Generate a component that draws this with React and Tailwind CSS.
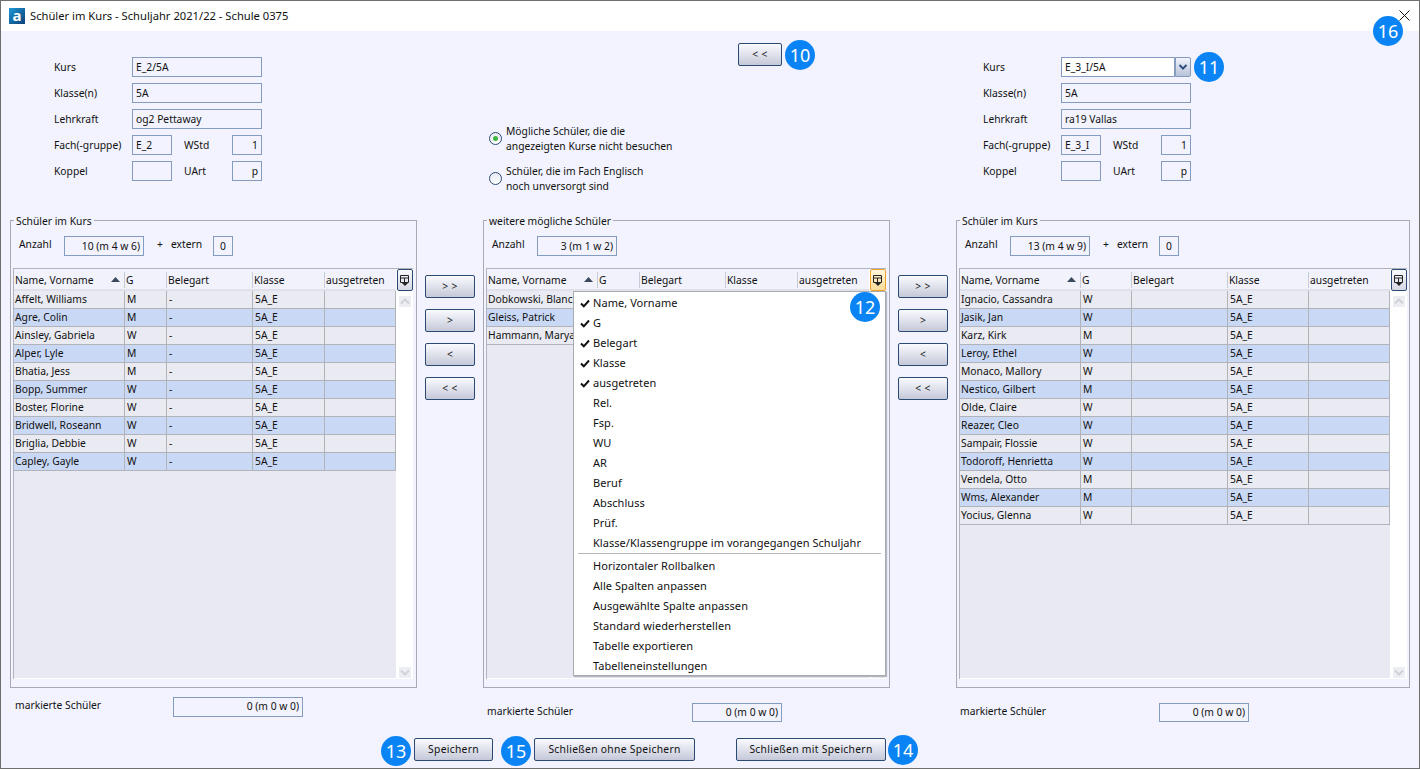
import React from 'react';

const linksRows = [
  ['Affelt, Williams', 'M'],
  ['Agre, Colin', 'M'],
  ['Ainsley, Gabriela', 'W'],
  ['Alper, Lyle', 'M'],
  ['Bhatia, Jess', 'M'],
  ['Bopp, Summer', 'W'],
  ['Boster, Florine', 'W'],
  ['Bridwell, Roseann', 'W'],
  ['Briglia, Debbie', 'W'],
  ['Capley, Gayle', 'W'],
];

// Die restlichen Spalten liegen hier komplett unter dem Menü
const mitteRows = [
  ['Dobkowski, Blanche'],
  ['Gleiss, Patrick'],
  ['Hammann, Maryann'],
];

const rechtsRows = [
  ['Ignacio, Cassandra', 'W'],
  ['Jasik, Jan', 'W'],
  ['Karz, Kirk', 'M'],
  ['Leroy, Ethel', 'W'],
  ['Monaco, Mallory', 'W'],
  ['Nestico, Gilbert', 'M'],
  ['Olde, Claire', 'W'],
  ['Reazer, Cleo', 'W'],
  ['Sampair, Flossie', 'W'],
  ['Todoroff, Henrietta', 'W'],
  ['Vendela, Otto', 'M'],
  ['Wms, Alexander', 'M'],
  ['Yocius, Glenna', 'W'],
];

const menuOben = [
  ['Name, Vorname', true],
  ['G', true],
  ['Belegart', true],
  ['Klasse', true],
  ['ausgetreten', true],
  ['Rel.', false],
  ['Fsp.', false],
  ['WU', false],
  ['AR', false],
  ['Beruf', false],
  ['Abschluss', false],
  ['Prüf.', false],
  ['Klasse/Klassengruppe im vorangegangen Schuljahr', false],
];

const menuUnten = [
  'Horizontaler Rollbalken',
  'Alle Spalten anpassen',
  'Ausgewählte Spalte anpassen',
  'Standard wiederherstellen',
  'Tabelle exportieren',
  'Tabelleneinstellungen',
];

const SCHMAL = 'grid-cols-[111px_42px_86px_72px_71px]';
const BREIT = 'grid-cols-[121px_51px_96px_81px_81px]';

// Blauer Nummernkreis
const Badge = ({ n, className }) => (
  <div className={`absolute w-[30px] h-[30px] rounded-full bg-[#0a84f4] text-white text-[18px] leading-[30px] text-center z-30 ${className}`}>
    {n}
  </div>
);

const Feld = ({ children, className = '', right }) => (
  <div className={`h-5 border border-[#839cc0] px-[3px] leading-[18px] whitespace-nowrap ${right ? 'text-right' : ''} ${className}`}>
    {children}
  </div>
);

const Knopf = ({ children, className = '' }) => (
  <button className={`border border-[#2b4a73] rounded-[2px] bg-gradient-to-b from-[#fafbff] to-[#c5c8d8] text-[10.3px] tracking-[0.3px] text-[#111] flex items-center justify-center ${className}`}>
    {children}
  </button>
);

const Formular = ({ kurs, klasse, lehrkraft, fach, wstd, uart, auswahl }) => (
  <div className="flex flex-col gap-[6px] w-[209px]">
    <div className="flex items-center h-5">
      <span className="w-[78px] pt-[2px]">Kurs</span>
      {auswahl ? (
        <div className="flex w-[130px] h-5">
          <div className="w-[114px] h-5 border border-[#839cc0] bg-white px-[3px] leading-[18px]">{kurs}</div>
          <div className="w-4 h-5 border border-[#839cc0] rounded-r-[2px] bg-gradient-to-b from-[#f2f4fb] to-[#b9c2d8] flex items-center justify-center">
            <svg width="10" height="8" viewBox="0 0 10 8"><path d="M1.5 2 L5 5.5 L8.5 2" fill="none" stroke="#2f4f7f" strokeWidth="2" /></svg>
          </div>
        </div>
      ) : (
        <Feld className="w-[130px]">{kurs}</Feld>
      )}
    </div>
    <div className="flex items-center h-5">
      <span className="w-[78px] pt-[2px]">Klasse(n)</span>
      <Feld className="w-[130px]">{klasse}</Feld>
    </div>
    <div className="flex items-center h-5">
      <span className="w-[78px] pt-[2px]">Lehrkraft</span>
      <Feld className="w-[130px]">{lehrkraft}</Feld>
    </div>
    <div className="flex items-center h-5">
      <span className="w-[78px] pt-[2px]">Fach(-gruppe)</span>
      <Feld className="w-10">{fach}</Feld>
      <span className="ml-3 w-[48px] pt-[2px]">WStd</span>
      <Feld className="w-[30px]" right>{wstd}</Feld>
    </div>
    <div className="flex items-center h-5">
      <span className="w-[78px] pt-[2px]">Koppel</span>
      <Feld className="w-10" />
      <span className="ml-3 w-[48px] pt-[2px]">UArt</span>
      <Feld className="w-[30px]" right>{uart}</Feld>
    </div>
  </div>
);

const Radio = ({ an, children }) => (
  <div className="flex items-center gap-[4px]">
    <div className="w-[13px] h-[13px] rounded-full border border-[#2b4a73] bg-gradient-to-b from-[#e8ebf5] to-white flex items-center justify-center">
      {an && <div className="w-[5px] h-[5px] rounded-full bg-[#3fb53f]" />}
    </div>
    <div className="leading-[15px] pt-px">{children}</div>
  </div>
);

const MenuIcon = () => (
  <svg width="11" height="13" viewBox="0 0 11 13">
    <path d="M1.5 1.5 H9.5 V8.5 H1.5 Z M1.5 4 H9.5 M5.5 4 V8.5" fill="none" stroke="#222" strokeWidth="1" />
    <path d="M2.5 8.5 H9.5 L6 12 Z" fill="#222" />
  </svg>
);

const Pfeil = ({ unten }) => (
  <div className={`w-3 h-[11px] flex items-center justify-center bg-[#eceef3] ${unten ? 'mt-auto mb-[1px]' : 'mt-[5px]'}`}>
    <svg width="10" height="7" viewBox="0 0 10 7">
      <path d={unten ? 'M1 1.5 L5 5.5 L9 1.5' : 'M1 5.5 L5 1.5 L9 5.5'} fill="none" stroke="#d0d2d9" strokeWidth="2" />
    </svg>
  </div>
);

const Tabelle = ({ rows, spalten, breite, aktiv, beleg, klasse }) => (
  <div className={`relative flex h-[411px] border-t border-l border-[#b0b2bc] ${breite}`}>
    <div className="flex-1 flex flex-col bg-[#e8e9f3] border-b border-white">
      <div className={`grid ${spalten} h-[22px] pt-px bg-[#f1f2fc] border-b-2 border-[#dfe0ea] items-center shrink-0`}>
        <div className="relative pl-px border-r border-[#c9cbd6] h-4 leading-4">
          Name, Vorname
          <svg className="absolute right-[4px] top-[5px]" width="9" height="5" viewBox="0 0 9 5"><path d="M0 5 L4.5 0 L9 5 Z" fill="#3b4a5c" /></svg>
        </div>
        <div className="pl-px border-r border-[#c9cbd6] h-4 leading-4">G</div>
        <div className="pl-px border-r border-[#c9cbd6] h-4 leading-4">Belegart</div>
        <div className="pl-px border-r border-[#c9cbd6] h-4 leading-4">Klasse</div>
        <div className="pl-px h-4 leading-4">ausgetreten</div>
      </div>
      {rows.map(([name, g], i) => (
        <div key={name} className={`grid ${spalten} h-[18px] leading-[17px] border-b border-[#b1b3b8] shrink-0 ${i % 2 ? 'bg-[#c9d8f5]' : 'bg-[#e9eaf2]'}`}>
          <div className="pl-px border-r border-[#b1b3b8] whitespace-nowrap overflow-hidden">{name}</div>
          <div className="pl-[2px] border-r border-[#b1b3b8]">{g}</div>
          <div className="pl-[2px] border-r border-[#b1b3b8]">{beleg}</div>
          <div className="pl-[2px] border-r border-[#b1b3b8]">{klasse}</div>
          <div className="border-r border-[#b1b3b8]" />
        </div>
      ))}
    </div>
    <div className="w-[17px] flex flex-col items-center bg-white">
      <div className={`w-[16px] h-[22px] shrink-0 rounded-[2px] border flex items-center justify-center ${aktiv ? 'border-[#f0a22e] bg-gradient-to-b from-[#fff6dc] to-[#fbdc97]' : 'border-[#2b4a73] bg-gradient-to-b from-[#fafbff] to-[#d5d8e4]'}`}>
        <MenuIcon />
      </div>
      <Pfeil />
      <Pfeil unten />
    </div>
  </div>
);

const Panel = ({ titel, anzahl, extern, breite, tabelleBreite, spalten, rows, aktiv, beleg, klasse }) => (
  <div className={`relative h-[468px] border border-[#a6a9b6] pl-[2px] ${breite}`}>
    <span className="absolute -top-[7px] left-[3px] px-[2px] bg-[#f2f3fe] leading-[15px]">{titel}</span>
    <div className="flex items-center h-5 mt-[15px] ml-[6px]">
      <span className="w-[45px] pb-[2px]">Anzahl</span>
      <Feld className="w-20" right>{anzahl}</Feld>
      {extern && (
        <>
          <span className="ml-[13px] w-[14px] pb-[2px]">+</span>
          <span className="w-[42px] pb-[2px]">extern</span>
          <Feld className="w-5 text-center !px-0">{extern}</Feld>
        </>
      )}
    </div>
    <div className="mt-3">
      <Tabelle rows={rows} spalten={spalten} breite={tabelleBreite} aktiv={aktiv} beleg={beleg} klasse={klasse} />
    </div>
  </div>
);

const Markiert = ({ abstand, labelBreite, inputBreite, hoehe, pl }) => (
  <div className={`flex ${abstand} ${pl}`}>
    <span className={`${labelBreite} leading-4`}>markierte Schüler</span>
    <div className={`${inputBreite} ${hoehe} border border-[#839cc0] px-[3px] text-right leading-[17px]`}>0 (m 0 w 0)</div>
  </div>
);

const PfeilSpalte = () => (
  <div className="w-[66px] pl-[8px] flex flex-col gap-[11px] pt-[55px]">
    <Knopf className="w-[50px] h-[23px]">&gt; &gt;</Knopf>
    <Knopf className="w-[50px] h-[23px]">&gt;</Knopf>
    <Knopf className="w-[50px] h-[23px]">&lt;</Knopf>
    <Knopf className="w-[50px] h-[23px]">&lt; &lt;</Knopf>
  </div>
);

function App() {
  return (
    <div className="relative w-[1420px] h-[769px] overflow-hidden flex flex-col border border-[#6f6f6f] bg-[#f2f3fe] text-[10.3px] text-[#111] font-['Noto_Sans',sans-serif]">
      {/* Titelleiste */}
      <div className="h-[30px] bg-white flex items-center pl-2 shrink-0">
        <div className="w-4 h-4 bg-gradient-to-br from-[#1f9ad6] to-[#0d3f78] text-white font-bold text-[15px] leading-[14px] text-center">a</div>
        <span className="ml-[5px] text-[11.2px] text-[#111]">Schüler im Kurs - Schuljahr 2021/22 - Schule 0375</span>
        <svg className="ml-auto mr-[9px] -mt-[2px]" width="11" height="11" viewBox="0 0 11 11"><path d="M0.5 0.5 L10.5 10.5 M10.5 0.5 L0.5 10.5" stroke="#111" strokeWidth="1" /></svg>
      </div>

      {/* Kopfbereich */}
      <div className="flex h-[189px] pt-[26px] pl-[53px] shrink-0">
        <Formular kurs="E_2/5A" klasse="5A" lehrkraft="og2 Pettaway" fach="E_2" wstd="1" uart="p" />
        <div className="w-[494px] ml-[226px] -mt-[14px] flex flex-col">
          <Knopf className="ml-[249px] w-[44px] h-[23px]">&lt; &lt;</Knopf>
          <div className="mt-[57px] flex flex-col gap-[9px]">
            <Radio an>Mögliche Schüler, die die<br />angezeigten Kurse nicht besuchen</Radio>
            <Radio>Schüler, die im Fach Englisch<br />noch unversorgt sind</Radio>
          </div>
        </div>
        <Formular auswahl kurs="E_3_I/5A" klasse="5A" lehrkraft="ra19 Vallas" fach="E_3_I" wstd="1" uart="p" />
      </div>

      {/* Tabellenbereich */}
      <div className="flex pl-[9px]">
        <div>
          <Panel titel="Schüler im Kurs" anzahl="10 (m 4 w 6)" extern="0" breite="w-[407px]" tabelleBreite="w-[400px]" spalten={SCHMAL} rows={linksRows} beleg="-" klasse="5A_E" />
          <Markiert abstand="mt-[9px]" pl="pl-[5px]" labelBreite="w-[158px]" inputBreite="w-[130px]" hoehe="h-5" />
        </div>
        <PfeilSpalte />
        <div>
          <Panel titel="weitere mögliche Schüler" anzahl="3 (m 1 w 2)" breite="w-[407px]" tabelleBreite="w-[400px]" spalten={SCHMAL} rows={mitteRows} aktiv />
          <Markiert abstand="mt-[15px]" pl="pl-[4px]" labelBreite="w-[205px]" inputBreite="w-[90px]" hoehe="h-[19px]" />
        </div>
        <PfeilSpalte />
        <div>
          <Panel titel="Schüler im Kurs" anzahl="13 (m 4 w 9)" extern="0" breite="w-[454px]" tabelleBreite="w-[448px]" spalten={BREIT} rows={rechtsRows} klasse="5A_E" />
          <Markiert abstand="mt-[15px]" pl="pl-[4px]" labelBreite="w-[199px]" inputBreite="w-[90px]" hoehe="h-[19px]" />
        </div>
      </div>

      {/* Fußleiste */}
      <div className="absolute left-[413px] top-[737px] flex">
        <Knopf className="w-[79px] h-[23px]">Speichern</Knopf>
        <Knopf className="ml-[41px] w-[161px] h-[23px]">Schließen ohne Speichern</Knopf>
        <Knopf className="ml-[41px] w-[150px] h-[23px]">Schließen mit Speichern</Knopf>
      </div>

      {/* Spaltenmenü */}
      <div className="absolute left-[572px] top-[290px] w-[313px] h-[385px] bg-white border border-[#a9abb3] shadow-[1px_1px_1px_#b5b7c0] z-20 flex flex-col pt-px text-[11px] tracking-[0.05px]">
        {menuOben.map(([text, an]) => (
          <div key={text} className="h-5 shrink-0 flex items-center">
            <span className="w-[19px] flex justify-center pl-[3px]">
              {an && <svg width="10" height="9" viewBox="0 0 10 9"><path d="M1 4.5 L3.8 7.3 L9 1.5" fill="none" stroke="#111" strokeWidth="2" /></svg>}
            </span>
            <span className="whitespace-nowrap">{text}</span>
          </div>
        ))}
        <div className="h-px bg-[#b5b7bd] mx-[4px] mb-[2px] shrink-0" />
        {menuUnten.map(text => (
          <div key={text} className="h-5 shrink-0 flex items-center pl-[19px]">{text}</div>
        ))}
      </div>

      <Badge n="10" className="left-[784px] top-[39px]" />
      <Badge n="11" className="left-[1193px] top-[51px]" />
      <Badge n="12" className="left-[849px] top-[291px]" />
      <Badge n="13" className="left-[380px] top-[735px]" />
      <Badge n="15" className="left-[500px] top-[735px]" />
      <Badge n="14" className="left-[887px] top-[734px]" />
      <Badge n="16" className="left-[1372px] top-[15px]" />
    </div>
  );
}

export default App;
